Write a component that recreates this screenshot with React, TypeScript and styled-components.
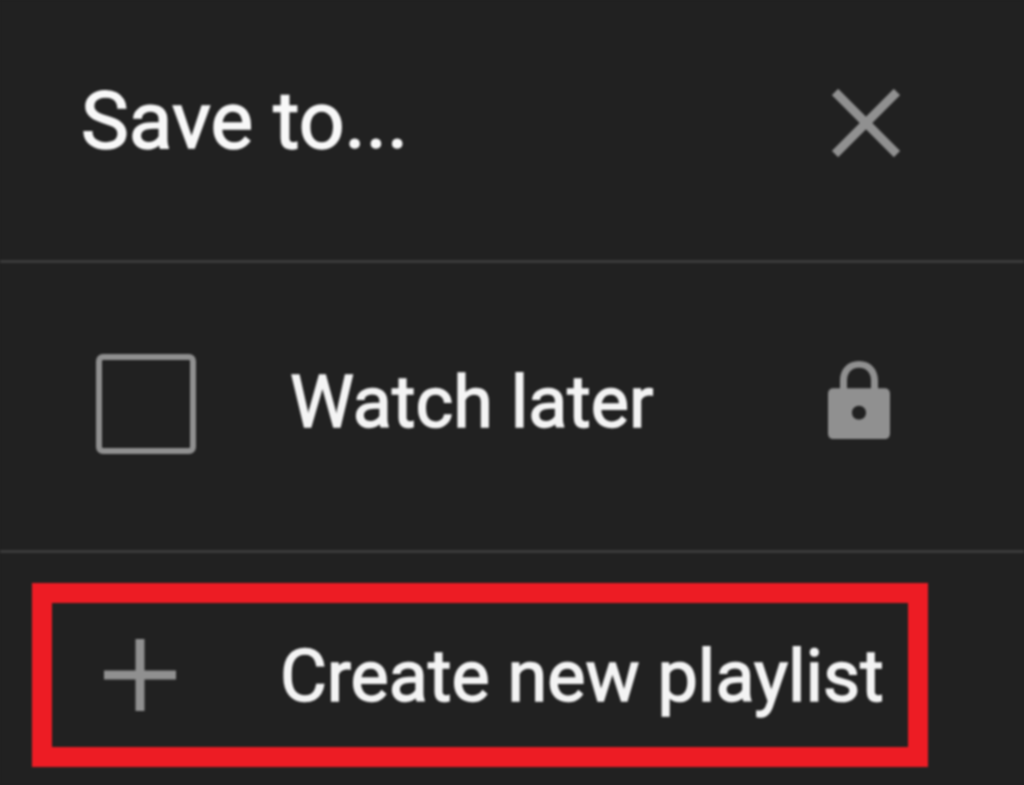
import React from "react";
import styled, { createGlobalStyle } from "styled-components";

const Global = createGlobalStyle`
  html, body { margin: 0; padding: 0; background: #212121; }
  body { font-family: Roboto, "Liberation Sans", sans-serif; }
`;

const Dialog = styled.div`
  width: 1024px;
  height: 785px;
  overflow: hidden;
  background: #212121;
  color: #f1f1f1;
  display: flex;
  flex-direction: column;
  font-family: Roboto, "Liberation Sans", sans-serif;
  filter: blur(0.9px);
`;

const Header = styled.header`
  height: 263px;
  box-sizing: border-box;
  padding: 0 124px 14px 81px;
  display: flex;
  align-items: center;
  justify-content: space-between;
  border-bottom: 3px solid #3a3a3a;
`;

const Title = styled.h2`
  margin: 0 0 5px;
  font-size: 80.5px;
  font-weight: 400;
  line-height: 84px;
  color: #f8f8f8;
  -webkit-text-stroke: 1.5px #f8f8f8;
`;

const IconSlot = styled.span`
  display: flex;
  flex: none;
  color: #909090;
`;

const LockSlot = styled(IconSlot)`
  margin-bottom: 8px;
`;

const Row = styled.div`
  height: 290px;
  box-sizing: border-box;
  padding: 0 134px 6px 96px;
  display: flex;
  align-items: center;
  border-bottom: 3px solid #3a3a3a;
`;

const Check = styled.span`
  width: 100px;
  height: 100px;
  box-sizing: border-box;
  border: 6px solid #909090;
  border-radius: 7px;
  flex: none;
`;

const RowLabel = styled.span`
  flex: 1;
  margin: 0 0 2px 94px;
  font-size: 72px;
  line-height: 76px;
  color: #f4f4f4;
  -webkit-text-stroke: 1.5px #f4f4f4;
`;

const CreateButton = styled.div`
  margin: 30px 0 0 32px;
  width: 896px;
  height: 184px;
  box-sizing: border-box;
  border: 20px solid #ed1c24;
  padding-left: 52px;
  display: flex;
  align-items: center;
`;

const CreateLabel = styled.span`
  margin: 4px 0 0 104px;
  font-size: 72px;
  line-height: 76px;
  white-space: nowrap;
  color: #f4f4f4;
  -webkit-text-stroke: 1.5px #f4f4f4;
`;

export default function App() {
  return (
    <>
      <Global />
      <Dialog>
        <Header>
          <Title>Save to...</Title>
          <IconSlot>
            <svg width="68" height="68" viewBox="0 0 68 68" fill="none" stroke="currentColor" strokeWidth="9">
              <path d="M3 3 L65 65 M65 3 L3 65" />
            </svg>
          </IconSlot>
        </Header>
        <Row>
          <Check />
          <RowLabel>Watch later</RowLabel>
          <LockSlot>
            <svg width="62" height="78" viewBox="0 0 62 80" preserveAspectRatio="none" fill="currentColor">
              <path
                fillRule="evenodd"
                d="M31 0 C43 0 50 9 50 20 V28 H56 C60 28 62 30 62 34 V74 C62 78 60 80 56 80 H6 C2 80 0 78 0 74 V34 C0 30 2 28 6 28 H12 V20 C12 9 19 0 31 0 Z M31 7 C23 7 19 13 19 20 V28 H43 V20 C43 13 39 7 31 7 Z M31 46 C27 46 24 49 24 53 C24 57 27 60 31 60 C35 60 38 57 38 53 C38 49 35 46 31 46 Z"
              />
            </svg>
          </LockSlot>
        </Row>
        <CreateButton>
          <IconSlot>
            <svg width="72" height="72" viewBox="0 0 72 72" fill="none" stroke="currentColor" strokeWidth="9">
              <path d="M36 0 V72 M0 36 H72" />
            </svg>
          </IconSlot>
          <CreateLabel>Create new playlist</CreateLabel>
        </CreateButton>
      </Dialog>
    </>
  );
}
